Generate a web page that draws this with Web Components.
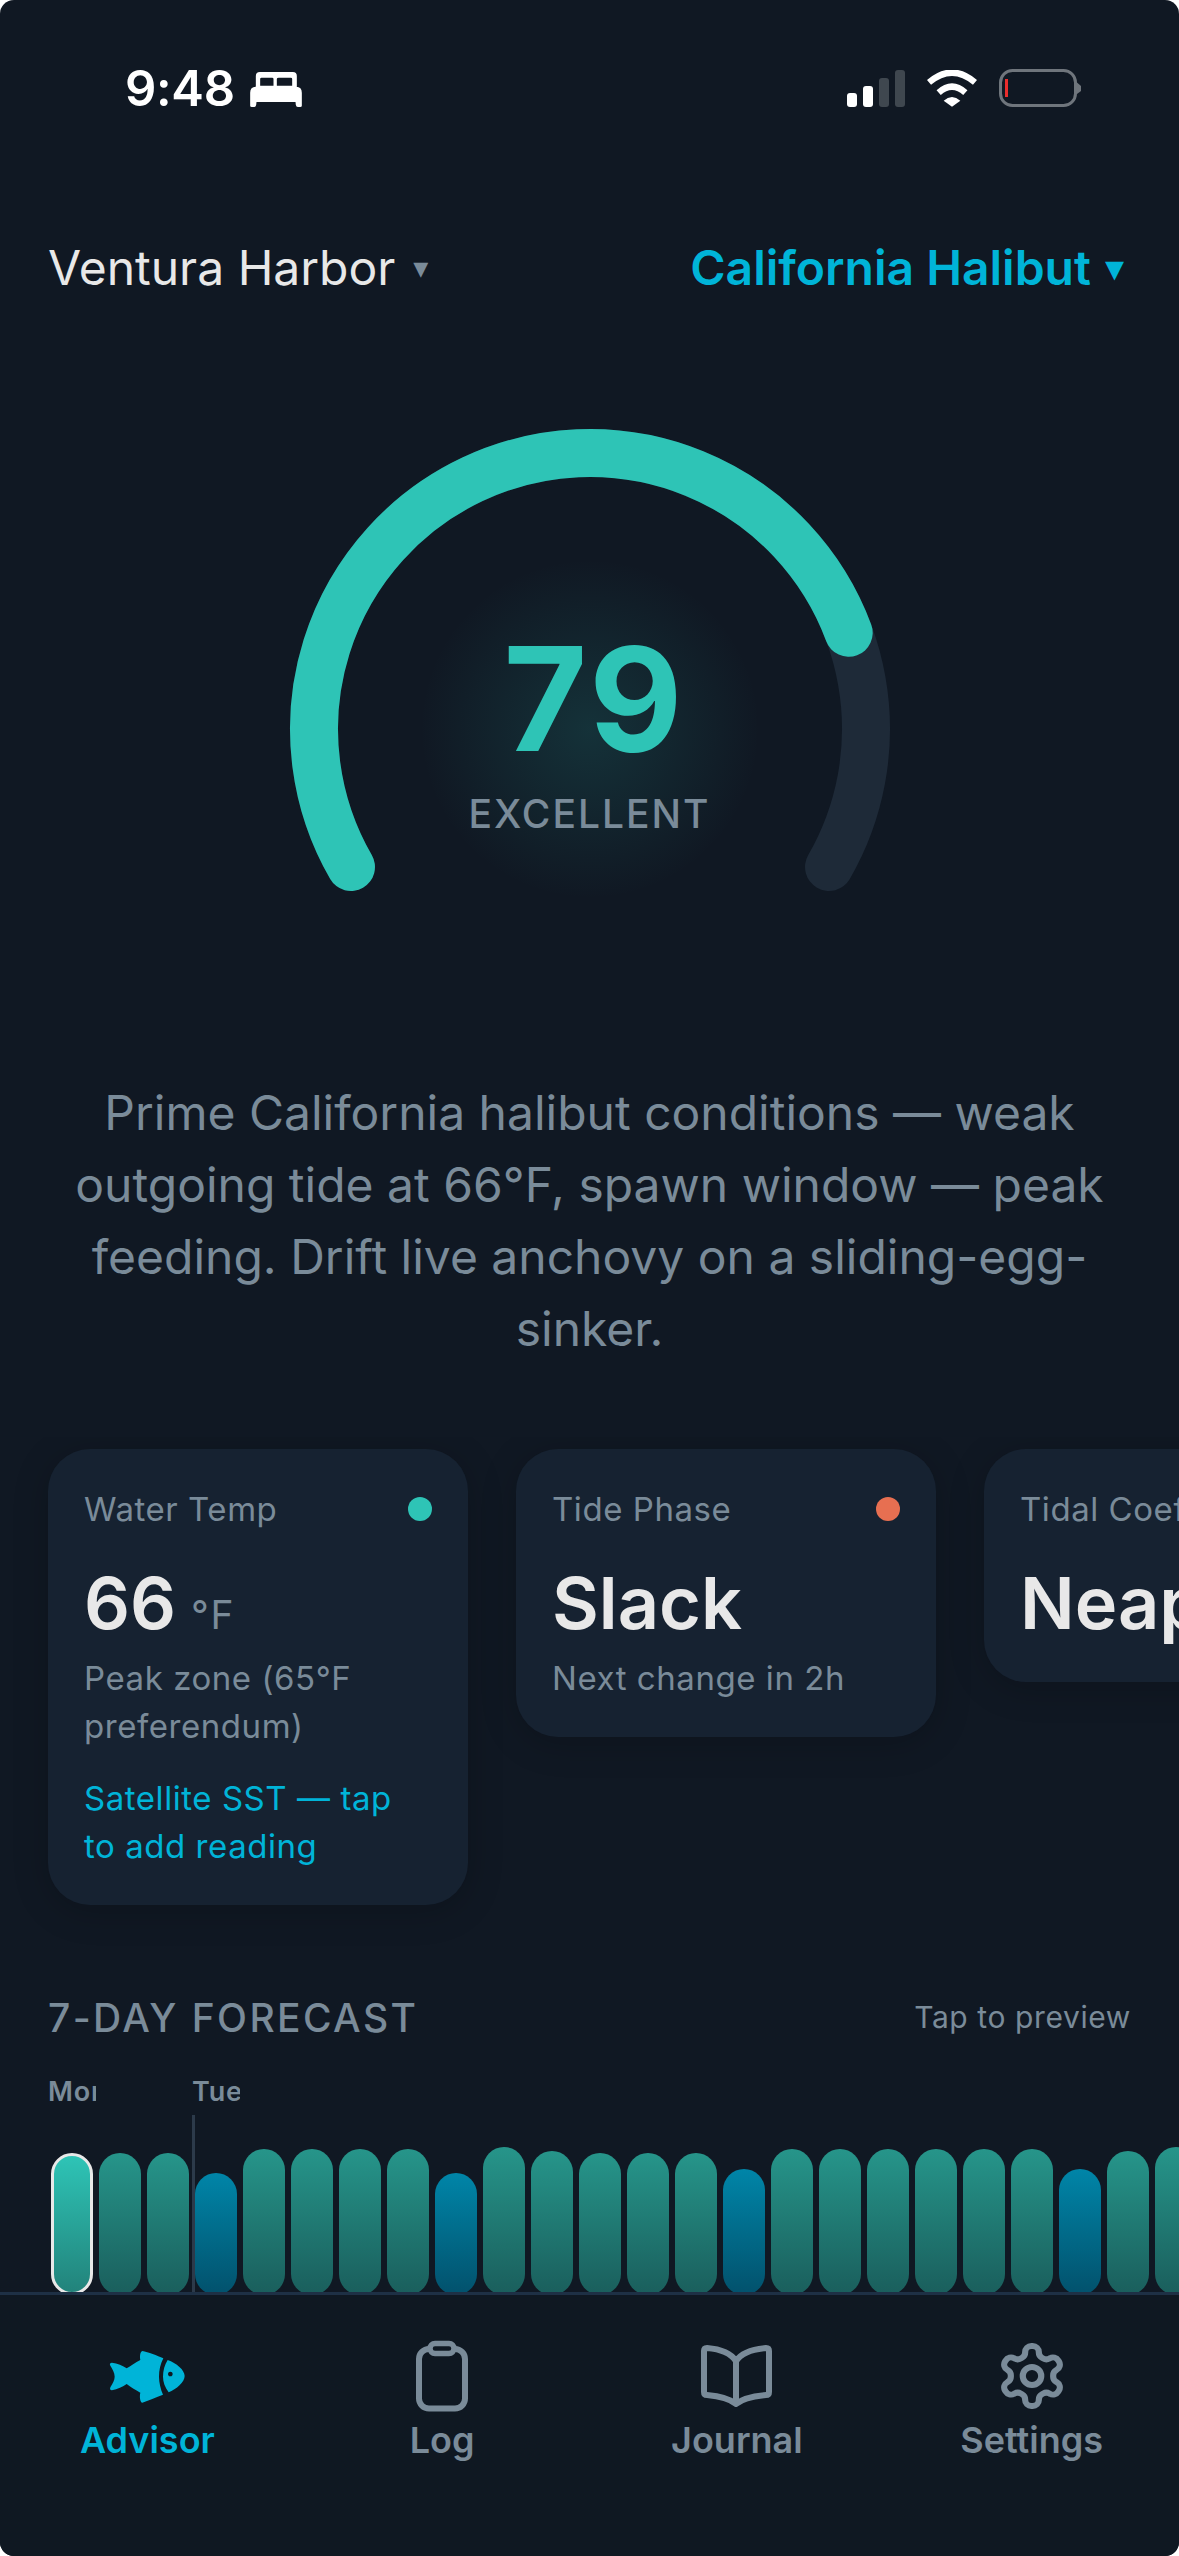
<!DOCTYPE html>
<html lang="en"><head><meta charset="utf-8"><title>Advisor</title>
<style>
html,body{margin:0;padding:0;background:#fff}
body{font-family:Inter,"Liberation Sans",sans-serif;width:1179px;height:2556px;overflow:hidden}
</style></head><body>
<phone-app>
  <status-bar time="9:48"></status-bar>
  <spot-header></spot-header>
  <score-gauge score="79" label="EXCELLENT"></score-gauge>
  <advice-text>Prime California halibut conditions — weak outgoing tide at 66°F, spawn window — peak feeding. Drift live anchovy on a sliding-egg-sinker.</advice-text>
  <metric-row>
    <metric-card dot="#2EC4B6"><span slot="label">Water Temp</span><span slot="value">66</span><span slot="unit">°F</span><span slot="sub">Peak zone (65°F preferendum)</span><span slot="note">Satellite SST — tap to add reading</span></metric-card>
    <metric-card dot="#E76F51"><span slot="label">Tide Phase</span><span slot="value">Slack</span><span slot="sub">Next change in 2h</span></metric-card>
    <metric-card dot="#2EC4B6"><span slot="label">Tidal Coefficient</span><span slot="value">Neap</span></metric-card>
  </metric-row>
  <forecast-panel></forecast-panel>
  <tab-bar slot="nav">
    <tab-item active label="Advisor"><svg width="78.33" height="55" viewBox="85 85 235 165"><path fill-rule="evenodd" fill="#00B4D8" d="M97 126C113 128 130 135 141 143C153 136 167 126 182 118C180 108 181 93 188 91C205 94 233 105 251 113C242 130 238 150 238 168C238 186 243 205 250 222C230 230 205 240 188 246C181 245 179 228 182 216C167 208 153 199 141 190C130 198 113 206 97 209C90 208 90 203 93 198C99 188 105 178 105 168C105 156 98 144 92 135C89 130 91 126 97 126ZM264 118C290 127 315 148 315 166C315 184 290 206 267 215C256 200 250 184 250 168C250 150 255 132 264 118ZM272 153a7 7 0 1 0 .01 0Z"/></svg></tab-item>
    <tab-item label="Log"><svg width="72" height="72" viewBox="0 0 72 72" fill="none" stroke="#7A8B99" stroke-width="6"><rect x="13" y="9" width="46" height="59.5" rx="10"/><rect x="24" y="3.5" width="24" height="10" rx="5" fill="#0F1822" stroke-width="5.5"/></svg></tab-item>
    <tab-item label="Journal"><svg width="76" height="66" viewBox="700 2343 76 66" fill="none" stroke="#7A8B99" stroke-width="6" stroke-linejoin="round" stroke-linecap="round"><path d="M737 2361V2403"/><path d="M737 2361C731 2352 720 2349 708 2348Q705 2348 705 2351V2392Q705 2395 708 2395C720 2396 730 2398 737 2404C744 2398 755 2396 767 2395Q770 2395 770 2392V2351Q770 2348 767 2348C755 2349 743 2352 737 2361Z"/></svg></tab-item>
    <tab-item label="Settings"><svg width="74" height="72" viewBox="0 0 24 24" preserveAspectRatio="none" fill="none" stroke="#7A8B99" stroke-width="2" stroke-linejoin="round" stroke-linecap="round"><path d="M12.22 2h-.44a2 2 0 0 0-2 2v.18a2 2 0 0 1-1 1.73l-.43.25a2 2 0 0 1-2 0l-.15-.08a2 2 0 0 0-2.73.73l-.22.38a2 2 0 0 0 .73 2.73l.15.1a2 2 0 0 1 1 1.72v.51a2 2 0 0 1-1 1.74l-.15.09a2 2 0 0 0-.73 2.73l.22.38a2 2 0 0 0 2.73.73l.15-.08a2 2 0 0 1 2 0l.43.25a2 2 0 0 1 1 1.73V20a2 2 0 0 0 2 2h.44a2 2 0 0 0 2-2v-.18a2 2 0 0 1 1-1.73l.43-.25a2 2 0 0 1 2 0l.15.08a2 2 0 0 0 2.73-.73l.22-.39a2 2 0 0 0-.73-2.73l-.15-.08a2 2 0 0 1-1-1.74v-.5a2 2 0 0 1 1-1.74l.15-.09a2 2 0 0 0 .73-2.73l-.22-.38a2 2 0 0 0-2.73-.73l-.15.08a2 2 0 0 1-2 0l-.43-.25a2 2 0 0 1-1-1.73V4a2 2 0 0 0-2-2z"/><circle cx="12" cy="12" r="3"/></svg></tab-item>
  </tab-bar>
</phone-app>
<script>
class Base extends HTMLElement{
  constructor(){super();this.attachShadow({mode:'open'});}
  connectedCallback(){this.shadowRoot.innerHTML=this.render();}
}
customElements.define('phone-app',class extends Base{render(){return `
<style>:host{display:flex;flex-direction:column;width:1179px;height:2556px;background:#101823;border-radius:14px;overflow:hidden}
main{flex:1;min-height:0;overflow:hidden;display:block}
footer{flex:none}</style>
<main><slot></slot></main><footer><slot name="nav"></slot></footer>`}});

customElements.define('status-bar',class extends Base{render(){return `
<style>:host{display:flex;justify-content:space-between;align-items:flex-end;box-sizing:border-box;height:232px;padding:69px 98px 125px 125px;color:#fff}
.l,.r{display:flex;align-items:flex-end}
.l{gap:15px}.r{gap:22px}
.t{font-size:49px;font-weight:600;line-height:37px;height:37px;letter-spacing:-.3px}
svg{display:block}</style>
<div class="l"><span class="t">${this.getAttribute('time')}</span>
<svg width="52" height="35" viewBox="480 123 155 105"><path fill="#fff" d="M509 123H608Q620 123 620 135V167H618Q635 167 635 185V224Q635 228 630 228H623Q618 228 617 222L616 213H499L498 222Q497 228 492 228H485Q480 228 480 224V185Q480 167 497 167V135Q497 123 509 123Z"/><path fill="#101823" d="M514 140H546Q550 140 550 144V164H510V144Q510 140 514 140ZM566 140H602Q606 140 606 144V164H560V144Q560 140 566 140Z"/></svg></div>
<div class="r">
<svg width="58" height="37" viewBox="0 0 58 37"><rect x="0" y="23" width="10" height="14" rx="3" fill="#fff"/><rect x="16" y="16" width="10" height="21" rx="3" fill="#fff"/><rect x="32" y="8" width="10" height="29" rx="3" fill="#3F474F"/><rect x="48" y="0" width="10" height="37" rx="3" fill="#3F474F"/></svg>
<svg width="50" height="37" viewBox="320 58 150 111"><path d="M326 95Q395 37 464 95M355 126Q395 90 435 126" fill="none" stroke="#fff" stroke-width="19"/><path d="M370 150Q395 128 420 150L395 168Z" fill="#fff"/></svg>
<svg width="82" height="38" viewBox="0 0 82 38"><rect x="1.5" y="1.5" width="75" height="35" rx="12" fill="none" stroke="#6F757C" stroke-width="3"/><rect x="6" y="10" width="3" height="18" fill="#EA2D2D"/><path d="M78 13.5L82 17V22L78 25Z" fill="#6F757C"/></svg>
</div>`}});

customElements.define('spot-header',class extends Base{render(){return `
<style>:host{display:flex;justify-content:space-between;align-items:center;height:72px;padding:0 55px 0 48px;font-size:48px;line-height:72px}
.a{color:#E8E8E8;display:flex;align-items:center}
.b{color:#00B4D8;font-weight:600;display:flex;align-items:center}
.a i,.b i{font-style:normal;font-family:"DejaVu Sans",sans-serif}
.a i{color:#7A8B99;font-size:30px;margin-left:18px}
.b i{font-size:38px;margin-left:14px}</style>
<div class="a">Ventura Harbor<i>▾</i></div><div class="b">California Halibut<i>▾</i></div>`}});

customElements.define('score-gauge',class extends Base{render(){return `
<style>:host{display:block;position:relative;width:660px;height:660px;margin:95px auto 0}
svg{display:block}
.c{position:absolute;inset:0;padding-top:228px;box-sizing:border-box;display:flex;flex-direction:column;align-items:center}
.n{font-size:144px;line-height:144px;font-weight:700;color:#2EC4B6;margin-left:10px;letter-spacing:3px}
.l{font-size:39px;font-weight:500;line-height:48px;margin-top:19px;letter-spacing:2px;color:#7A8B99}</style>
<svg width="660" height="660" viewBox="0 0 660 660"><defs><radialGradient id="g"><stop offset="0" stop-color="#2EC4B6" stop-opacity=".15"/><stop offset="1" stop-color="#2EC4B6" stop-opacity="0"/></radialGradient></defs>
<circle cx="330" cy="330" r="170" fill="url(#g)"/>
<path d="M90.98 468A276 276 0 1 1 569.02 468" fill="none" stroke="#1E2A38" stroke-width="48" stroke-linecap="round"/>
<path d="M90.98 468A276 276 0 1 1 588.7 233.8" fill="none" stroke="#2EC4B6" stroke-width="48" stroke-linecap="round"/></svg>
<div class="c"><div class="n">${this.getAttribute('score')}</div><div class="l">${this.getAttribute('label')}</div></div>`}});

customElements.define('advice-text',class extends Base{render(){return `
<style>:host{display:block;margin-top:18px;padding:0 48px;text-align:center;font-size:48px;line-height:72px;color:#7A8B99}</style><slot></slot>`}});

customElements.define('metric-row',class extends Base{render(){return `
<style>:host{display:flex;align-items:flex-start;gap:48px;margin-top:72px;padding:12px 48px 48px;overflow:hidden}</style><slot></slot>`}});

customElements.define('metric-card',class extends Base{render(){return `
<style>:host{display:block;flex:none;box-sizing:border-box;width:420px;padding:36px 36px 35px;background:#162231;border-radius:42px;box-shadow:0 6px 36px rgba(0,0,0,.2);letter-spacing:.55px}
.h{display:flex;justify-content:space-between;align-items:center;height:48px;font-size:33px;color:#7A8B99;white-space:nowrap}
.d{width:24px;height:24px;border-radius:50%;background:var(--dot);flex:none}
.v{margin-top:26px;line-height:88px;height:88px;white-space:nowrap}
::slotted([slot=value]){font-size:72px;font-weight:600;color:#E8E8E8;letter-spacing:0}
::slotted([slot=unit]){font-size:39px;color:#7A8B99;margin-left:15px;letter-spacing:1.5px}
::slotted([slot=sub]){display:block;margin-top:7px;font-size:33px;line-height:48px;color:#7A8B99}
::slotted([slot=note]){display:block;margin-top:24px;padding-right:24px;font-size:33px;line-height:48px;color:#00B4D8}</style>
<div class="h"><slot name="label"></slot><span class="d" style="--dot:${this.getAttribute('dot')}"></span></div>
<div class="v"><slot name="value"></slot><slot name="unit"></slot></div>
<slot name="sub"></slot><slot name="note"></slot>`}});

customElements.define('forecast-bar',class extends Base{render(){
 const k=this.getAttribute('kind');
 const bg={sel:'linear-gradient(#2EC4B6,#22837B)',teal:'linear-gradient(#26958A,#1A5E5C)',blue:'linear-gradient(#0085A8,#02516C)'}[k];
 const day=this.getAttribute('day');
 return `
<style>:host{display:flex;flex-direction:column;flex:none;width:48px}
.d{height:36px;font-size:27px;line-height:36px;font-weight:600;letter-spacing:.8px;color:#7A8B99;overflow:hidden;white-space:nowrap}
.a{position:relative;height:180px;margin-top:5px;display:flex;align-items:flex-end;justify-content:center}
.b{box-sizing:border-box;width:42px;height:${this.getAttribute('h')}px;border-radius:21px;background:${bg};${k==='sel'?'border:3px solid #E8E8E8;':''}}
.m{position:absolute;left:0;top:0;bottom:0;width:3px;background:#2C3A4A}</style>
<div class="d">${day||''}</div><div class="a">${day&&day!=='Mon'?'<i class="m"></i>':''}<div class="b"></div></div>`}});

customElements.define('forecast-panel',class extends Base{render(){
 const tops=[2153,2153,2153,2173,2149,2149,2149,2149,2173,2147,2151,2153,2153,2153,2169,2149,2149,2149,2149,2149,2149,2169,2151,2147];
 const bars=tops.map((t,i)=>{const blue=[3,8,14,21].includes(i);const day=i==0?'Mon':i==3?'Tue':'';
   return `<forecast-bar kind="${i==0?'sel':blue?'blue':'teal'}" h="${2295-t}" ${day?`day="${day}"`:''}></forecast-bar>`}).join('');
 return `
<style>:host{display:block;margin-top:40px}
.h{display:flex;justify-content:space-between;align-items:center;height:48px;padding:0 48px;color:#7A8B99}
.t{font-size:39px;font-weight:500;letter-spacing:2.4px}
.p{font-size:30px;letter-spacing:.6px}
.c{display:flex;margin-top:33px;padding-left:48px;overflow:hidden}</style>
<div class="h"><span class="t">7-DAY FORECAST</span><span class="p">Tap to preview</span></div>
<div class="c">${bars}</div>`}});

customElements.define('tab-bar',class extends Base{render(){return `
<style>:host{display:flex;box-sizing:border-box;height:264px;border-top:3px solid #1E3045;background:#0F1822;padding-top:45px}</style><slot></slot>`}});

customElements.define('tab-item',class extends Base{render(){const on=this.hasAttribute('active');return `
<style>:host{display:flex;flex:1;flex-direction:column;align-items:center}
.i{height:72px;display:flex;align-items:center;justify-content:center}
.l{margin-top:4px;font-size:36px;line-height:48px;font-weight:600;color:${on?'#00B4D8':'#7A8B99'}}</style>
<div class="i"><slot></slot></div><div class="l">${this.getAttribute('label')}</div>`}});
</script>
</body></html>
